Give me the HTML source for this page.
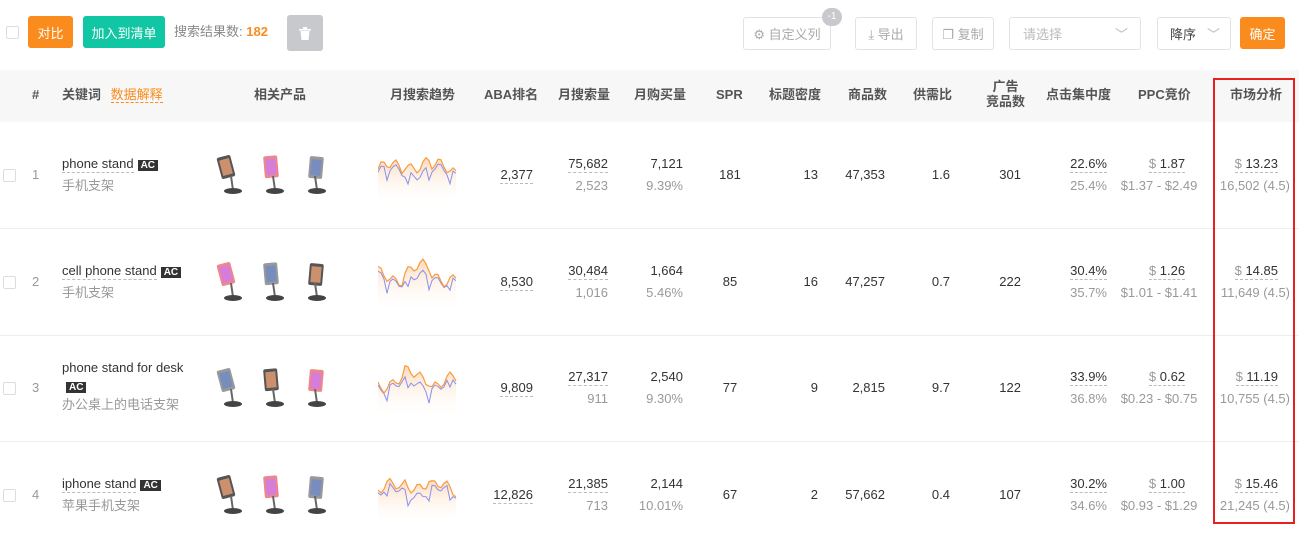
<!DOCTYPE html>
<html><head><meta charset="utf-8"><style>
*{margin:0;padding:0;box-sizing:border-box}
body{width:1299px;height:545px;background:#fff;font-family:"Liberation Sans","Noto Sans CJK SC",sans-serif;font-size:13px;color:#333;position:relative;overflow:hidden}
.a{position:absolute;white-space:nowrap;line-height:18px}
.btn{position:absolute;border-radius:3px;font-size:13px;display:flex;align-items:center;justify-content:center}
.ob{border:1px solid #e3e3e3;color:#aaa;background:#fff}
.cb{position:absolute;width:13px;height:13px;border:1px solid #ddd;border-radius:2px;background:#fff}
.hd{position:absolute;top:70px;left:0;width:1299px;height:52px;background:#f7f7f7}
.h{position:absolute;font-weight:bold;color:#555;font-size:13px;white-space:nowrap;line-height:16px}
.r{text-align:right}
.u{border-bottom:1px dashed #bbb;padding-bottom:1px}
.g{color:#999}
.ac{background:#333;color:#fff;font-size:10px;padding:0 3px;font-weight:bold;margin-left:4px}
.line{position:absolute;left:0;width:1299px;height:1px;background:#eee}
</style></head><body>
<div class="cb" style="left:6px;top:26px"></div>
<div class="btn" style="left:28px;top:16px;width:45px;height:32px;background:#fa8c1e;color:#fff">对比</div>
<div class="btn" style="left:83px;top:16px;width:82px;height:32px;background:#11c6a2;color:#fff">加入到清单</div>
<div class="a" style="left:174px;top:23px;color:#888">搜索结果数: <b style="color:#fa8c1e">182</b></div>
<div class="btn" style="left:287px;top:15px;width:36px;height:36px;background:#c8c9cc;color:#fff"><svg width="12" height="13" viewBox="0 0 12 13"><rect x="0" y="2" width="12" height="1.5" fill="#fff"/><rect x="4" y="0" width="4" height="2" fill="#fff"/><path d="M1.5 4h9l-1 9h-7z" fill="#fff"/></svg></div>
<div class="btn ob" style="left:743px;top:17px;width:88px;height:33px">⚙ 自定义列</div>
<div class="a" style="left:822px;top:8px;width:20px;height:18px;border-radius:9px;background:#c8c9cc;color:#fff;font-size:10px;text-align:center;line-height:18px">-1</div>
<div class="btn ob" style="left:855px;top:17px;width:62px;height:33px">⤓ 导出</div>
<div class="btn ob" style="left:932px;top:17px;width:62px;height:33px">❐ 复制</div>
<div class="btn ob" style="left:1009px;top:17px;width:132px;height:33px;justify-content:flex-start;padding-left:13px;color:#bbb">请选择<span style="position:absolute;right:12px;color:#bbb">﹀</span></div>
<div class="btn ob" style="left:1157px;top:17px;width:74px;height:33px;justify-content:flex-start;padding-left:12px;color:#444">降序<span style="position:absolute;right:10px;color:#bbb">﹀</span></div>
<div class="btn" style="left:1240px;top:17px;width:45px;height:32px;background:#fa8c1e;color:#fff">确定</div>

<div class="hd"></div>
<div class="h" style="left:32px;top:87px">#</div>
<div class="h" style="left:62px;top:87px">关键词 <span style="color:#fa8c1e;font-weight:normal;border-bottom:1px dashed #fa8c1e;margin-left:6px">数据解释</span></div>
<div class="h" style="left:254px;top:87px">相关产品</div>
<div class="h" style="left:390px;top:87px">月搜索趋势</div>
<div class="h" style="left:484px;top:87px">ABA排名</div>
<div class="h" style="left:558px;top:87px">月搜索量</div>
<div class="h" style="left:634px;top:87px">月购买量</div>
<div class="h" style="left:716px;top:87px">SPR</div>
<div class="h" style="left:769px;top:87px">标题密度</div>
<div class="h" style="left:848px;top:87px">商品数</div>
<div class="h" style="left:913px;top:87px">供需比</div>
<div class="h" style="left:986px;top:79px;text-align:center;line-height:15px">广告<br>竞品数</div>
<div class="h" style="left:1046px;top:87px">点击集中度</div>
<div class="h" style="left:1138px;top:87px">PPC竞价</div>
<div class="h" style="left:1230px;top:87px">市场分析</div>

<div class="line" style="top:228px"></div>
<div class="line" style="top:335px"></div>
<div class="line" style="top:441px"></div>

<div id="rows"></div>
<div class="a" style="left:1213px;top:78px;width:82px;height:446px;border:2px solid #e82020"></div>

<script>
const rows=[
["1","phone stand","手机支架","2,377","75,682","2,523","7,121","9.39%","181","13","47,353","1.6","301","22.6%","25.4%","1.87","$1.37 - $2.49","13.23","16,502 (4.5)"],
["2","cell phone stand","手机支架","8,530","30,484","1,016","1,664","5.46%","85","16","47,257","0.7","222","30.4%","35.7%","1.26","$1.01 - $1.41","14.85","11,649 (4.5)"],
["3","phone stand for desk","办公桌上的电话支架","9,809","27,317","911","2,540","9.30%","77","9","2,815","9.7","122","33.9%","36.8%","0.62","$0.23 - $0.75","11.19","10,755 (4.5)"],
["4","iphone stand","苹果手机支架","12,826","21,385","713","2,144","10.01%","67","2","57,662","0.4","107","30.2%","34.6%","1.00","$0.93 - $1.29","15.46","21,245 (4.5)"]];
const cy=[175,282,388,495];let h="";
function R(x,y,t,c){return `<div class="a r ${c||''}" style="right:${1299-x}px;top:${y-9}px">${t}</div>`}
function C(x,y,t,c){return `<div class="a ${c||''}" style="left:${x}px;top:${y-9}px;transform:translateX(-50%)">${t}</div>`}
rows.forEach((r,i)=>{const y=cy[i],t=y-11,b=y+11;
h+=`<div class="cb" style="left:3px;top:${y-6}px"></div>`;
h+=`<div class="a g" style="left:32px;top:${y-9}px">${r[0]}</div>`;
if(i==2){h+=`<div class="a" style="left:62px;top:${y-29}px">${r[1]}</div><div class="a" style="left:62px;top:${y-11}px"><span class="ac" style="margin:0 0 0 4px">AC</span></div><div class="a g" style="left:62px;top:${y+8}px">${r[2]}</div>`}
else h+=`<div class="a" style="left:62px;top:${t-9}px"><span class="u">${r[1]}</span><span class="ac">AC</span></div><div class="a g" style="left:62px;top:${b-9}px">${r[2]}</div>`;
for(let k=0;k<3;k++){const x=213+k*42;h+=`<svg class="a" style="left:${x}px;top:${y-25}px" width="40" height="46"><rect x="${6+k*3}" y="6" width="14" height="22" rx="2" fill="${['#555','#e88','#999'][(k+i)%3]}" transform="rotate(${-15+k*10} 13 17)"/><rect x="${8+k*3}" y="9" width="10" height="16" fill="${['#fa7','#c7f','#68c'][(k+i)%3]}" opacity=".7" transform="rotate(${-15+k*10} 13 17)"/><line x1="18" y1="26" x2="20" y2="40" stroke="#666" stroke-width="2"/><ellipse cx="20" cy="41" rx="9" ry="3" fill="#444"/></svg>`}
let p=[],q=[];for(let k=0;k<=26;k++){const xx=k*3;let s=Math.sin(k*1.3+i)*5+Math.sin(k*.4+i*2)*6;p.push(xx+","+(24-s-(k>8&&k<18?6:0)));q.push(xx+","+(27-s*0.8+(k%7==3?10:0)));}
h+=`<svg class="a" style="left:378px;top:${y-30}px" width="80" height="60"><defs><linearGradient id="g${i}" x1="0" y1="0" x2="0" y2="1"><stop offset="0" stop-color="#fcd9b8"/><stop offset="1" stop-color="#fff" stop-opacity="0"/></linearGradient></defs><polygon points="0,60 ${p.join(' ')} 78,60" fill="url(#g${i})"/><polyline points="${q.join(' ')}" fill="none" stroke="#8b8ff0" stroke-width="1"/><polyline points="${p.join(' ')}" fill="none" stroke="#fa9a3c" stroke-width="1.2"/></svg>`;
h+=R(533,y,`<span class="u">${r[3]}</span>`);
h+=R(608,t,`<span class="u">${r[4]}</span>`)+R(608,b,r[5],'g');
h+=R(683,t,r[6])+R(683,b,r[7],'g');
h+=C(730,y,r[8]);h+=R(818,y,r[9]);h+=R(885,y,r[10]);h+=R(950,y,r[11]);h+=R(1021,y,r[12]);
h+=R(1107,t,`<span class="u">${r[13]}</span>`)+R(1107,b,r[14],'g');
h+=C(1167,t,`<span class="u"><span class="g">$</span> ${r[15]}</span>`)+C(1159,b,r[16],'g');
h+=R(1278,t,`<span class="u"><span class="g">$</span> ${r[17]}</span>`)+R(1290,b,r[18],'g');
});
document.getElementById('rows').innerHTML=h;
</script>
</body></html>
